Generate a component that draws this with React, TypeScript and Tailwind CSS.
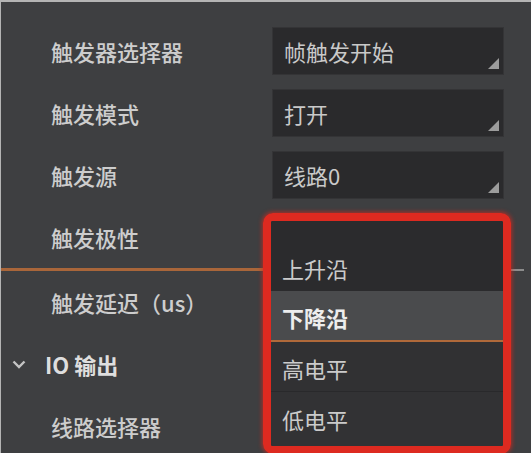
import React from "react";

const font = { fontFamily: '"Noto Sans CJK SC", "Noto Sans", sans-serif' };

function Caret() {
  return (
    <svg width="11" height="11" viewBox="0 0 11 11" className="absolute right-[4px] bottom-[5px]">
      <polygon points="11,0 11,11 0,11" fill="#9c9c9c" />
    </svg>
  );
}

function Select({ value }: { value: string }) {
  return (
    <div className="relative w-[232px] h-[48px] bg-[#2a2a2c] border border-[#343436] flex items-center pl-[11px] text-[22px] text-[#c9c9c9]">
      {value}
      <Caret />
    </div>
  );
}

function Row({ label, value }: { label: string; value?: string }) {
  return (
    <div className="flex items-center h-[62px]">
      <div className="w-[271px] pl-[50px] text-[22px] text-[#cdcdcd] font-medium">{label}</div>
      {value !== undefined && <Select value={value} />}
    </div>
  );
}

export default function App() {
  return (
    <div
      style={font}
      className="relative w-[531px] h-[453px] overflow-hidden bg-[#3e3f41] border-t-2 border-l border-[#b4b4b4] leading-none"
    >
      <div className="pt-[18px]">
        <Row label="触发器选择器" value="帧触发开始" />
        <Row label="触发模式" value="打开" />
        <Row label="触发源" value="线路0" />
        <Row label="触发极性" />
        <div className="flex items-center h-[3px]">
          <div className="w-[265px] h-[3px] bg-[#a9663a]" />
          <div className="ml-[245px] w-[13px] h-[2px] bg-[#8c8c8c]" />
        </div>
        <Row label="触发延迟（us）" />
        <div className="flex items-center h-[62px]">
          <svg width="14" height="9" viewBox="0 0 14 9" className="ml-[11px] mr-[19px]">
            <polyline points="1.5,1.5 7,7 12.5,1.5" fill="none" stroke="#c4c4c4" strokeWidth="2.4" />
          </svg>
          <span className="text-[22px] font-semibold text-[#dedede]">IO 输出</span>
        </div>
        <Row label="线路选择器" />
      </div>

      <div className="absolute left-[262px] top-[211px] w-[248px] h-[241px] rounded-[10px] border-[8px] border-[#dd2a20] shadow-[0_0_4px_1px_rgba(220,40,30,0.7)] overflow-hidden">
        <div className="flex flex-col h-full bg-[#2c2c2e] text-[22px] text-[#cbcbcb]">
          <div className="h-[70px] flex items-end pl-[11px] pb-[12px] bg-[#2b2b2d]">上升沿</div>
          <div className="h-[49px] flex items-center pl-[11px] pt-[3px] bg-[#4a4b4d] text-[#ededed] font-bold">下降沿</div>
          <div className="h-[2px] bg-[#b0693a]" />
          <div className="h-[50px] flex items-center pl-[11px] pt-[2px] bg-[#313133] border-b border-[#29292b]">高电平</div>
          <div className="flex-1 flex items-center pl-[11px] bg-[#323234]">低电平</div>
        </div>
      </div>
    </div>
  );
}
